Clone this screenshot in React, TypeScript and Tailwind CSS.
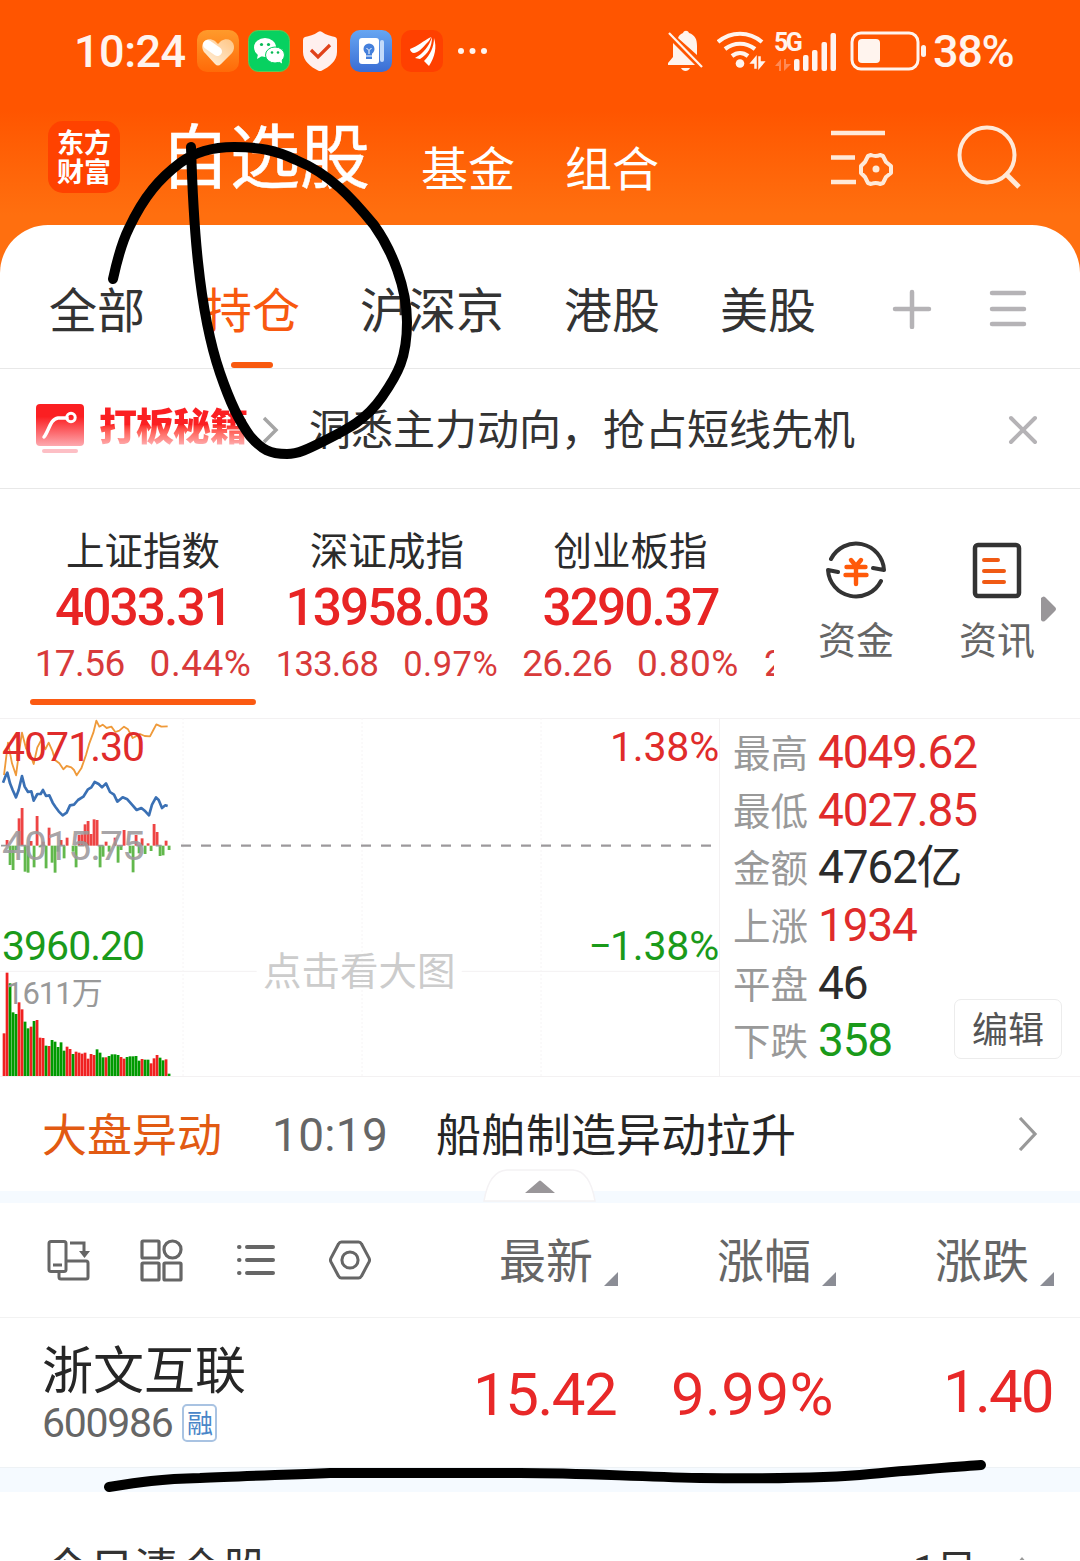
import type { ReactNode } from "react";
import clsx from "clsx";

const STATUS_APPS = ["health", "wechat", "shield", "notes", "eastmoney"] as const;

const INDICES = [
  { name: "上证指数", value: "4033.31", change: "17.56", rate: "0.44%", width: "w-[232px] ml-[27px]", small: false },
  { name: "深证成指", value: "13958.03", change: "133.68", rate: "0.97%", width: "w-[256px]", small: true },
  { name: "创业板指", value: "3290.37", change: "26.26", rate: "0.80%", width: "w-[231px]", small: false },
];

const STATS = [
  { label: "最高", value: "4049.62", color: "text-[#e02b2b]" },
  { label: "最低", value: "4027.85", color: "text-[#e02b2b]" },
  { label: "金额", value: "4762亿", color: "text-[#2b2b2b]" },
  { label: "上涨", value: "1934", color: "text-[#e02b2b]" },
  { label: "平盘", value: "46", color: "text-[#2b2b2b]" },
  { label: "下跌", value: "358", color: "text-[#1a9a1a]" },
];

const RED = "#f02121";
const GREEN = "#009a00";

// volume bars: [top, isUp]
const VOLUME: [number, number][] = [
  [970, 1], [788, 1], [820, 0], [907, 0], [912, 0], [877, 1], [898, 1], [935, 0],
  [955, 0], [950, 1], [933, 0], [930, 1], [983, 1], [984, 1], [1007, 0], [1008, 1],
  [990, 0], [995, 0], [1011, 0], [997, 0], [1022, 0], [1010, 1], [1017, 1], [1032, 0],
  [1025, 1], [1028, 1], [1031, 1], [1028, 1], [1046, 1], [1032, 1], [1035, 1], [1018, 0],
  [1028, 0], [1042, 0], [1042, 1], [1038, 0], [1033, 0], [1033, 0], [1035, 0], [1041, 1],
  [1046, 1], [1041, 0], [1039, 0], [1039, 0], [1038, 0], [1052, 0], [1047, 1], [1049, 0],
  [1049, 0], [1060, 1], [1045, 1], [1035, 1], [1043, 0], [1051, 0], [1048, 1], [1091, 0],
];

// momentum bars around the previous close: [slot, end]
const MOMENTUM: [number, number][] = [
  [1, 390], [2, 465], [3, 480], [4, 420], [5, 325], [6, 294], [7, 485], [8, 488], [9, 393],
  [10, 472], [11, 318], [12, 412], [13, 395], [14, 475], [15, 353], [16, 458], [17, 488],
  [18, 425], [19, 390], [20, 445], [21, 383], [23, 425], [24, 472], [25, 375], [26, 373],
  [27, 343], [28, 333], [29, 372], [30, 328], [31, 330], [32, 472], [33, 440], [34, 395],
  [35, 425], [37, 383], [38, 458], [39, 420], [40, 360], [42, 430], [43, 487], [44, 375],
  [45, 430], [46, 385], [47, 432], [48, 400], [49, 423], [50, 342], [51, 366], [52, 438],
  [53, 436], [54, 392], [55, 420],
];

const AVG_LINE =
  "12,195 24,98 36,160 48,196 58,120 66,68 78,115 90,130 101,162 112,112 124,90 136,118 146,98 158,125 165,150 178,160 190,178 200,168 214,172 222,180 230,196 244,175 258,135 268,100 280,68 289,32 298,50 308,44 320,54 334,50 346,66 358,62 372,50 384,58 398,84 410,78 420,72 434,78 450,79 460,60 469,43 484,50 503,49";
const PRICE_LINE =
  "9,218 16,200 22,188 30,220 38,240 48,262 56,240 66,198 74,230 84,246 94,244 101,272 112,252 122,252 129,240 138,258 148,256 158,278 166,290 176,304 188,316 200,308 210,286 222,284 234,270 250,260 264,238 274,232 284,216 296,222 306,232 318,220 330,246 342,254 352,275 368,262 382,268 396,284 410,300 424,294 436,304 447,316 456,284 468,262 476,270 486,294 496,286 503,288";

function AppIcon({ kind }: { kind: (typeof STATUS_APPS)[number] }) {
  if (kind === "health") {
    return (
      <svg viewBox="0 0 42 42" className="size-[42px]">
        <defs>
          <linearGradient id="health" x1="0" y1="0" x2="0" y2="1">
            <stop offset="0" stopColor="#ff9a2b" />
            <stop offset="1" stopColor="#ff6a08" />
          </linearGradient>
          <linearGradient id="heart" x1="1" y1="0" x2="0" y2="1">
            <stop offset="0" stopColor="#ffc583" />
            <stop offset="1" stopColor="#fff3e2" />
          </linearGradient>
        </defs>
        <rect width="42" height="42" rx="10" fill="url(#health)" />
        <path d="M18 34L8 23C1 15 9 5 18 11l3 3 3-3c9-6 17 4 11 12L24 34q-3 3-6 0z" fill="url(#heart)" />
        <path d="M10.500 14.500l10 7" stroke="#fff" strokeWidth="9" strokeLinecap="round" />
      </svg>
    );
  }
  if (kind === "wechat") {
    return (
      <svg viewBox="0 0 42 42" className="size-[42px]">
        <rect x=".5" y=".5" width="41" height="41" rx="10" fill="#07d160" stroke="#5cc956" />
        <ellipse cx="17" cy="17.500" rx="11" ry="9.500" fill="#fff" />
        <path d="M10 24l-1 5 5-3z" fill="#fff" />
        <ellipse cx="27" cy="25" rx="9.500" ry="8" fill="#fff" stroke="#07d160" />
        <path d="M30 31l4 2.500-.5-5z" fill="#fff" />
        <g fill="#07b955">
          <circle cx="13.500" cy="14.500" r="1.600" />
          <circle cx="20.500" cy="14.500" r="1.600" />
          <circle cx="24" cy="22.500" r="1.300" />
          <circle cx="30" cy="22.500" r="1.300" />
        </g>
      </svg>
    );
  }
  if (kind === "shield") {
    return (
      <svg viewBox="0 0 42 42" className="size-[42px]">
        <path d="M19 2q2-1.500 4 0c4 3 9 4 13 5q2 .5 2 3v12c0 9-8 15-15 18.500q-2 1-4 0C12 37 4 31 4 22V10q0-2.500 2-3c4-1 9-2 13-5z" fill="#fff0ee" />
        <path d="M12 20l7 7 12-12" fill="none" stroke="#e0421a" strokeWidth="3.200" />
      </svg>
    );
  }
  if (kind === "notes") {
    return (
      <svg viewBox="0 0 42 42" className="size-[42px]">
        <defs>
          <linearGradient id="notes" x1="0" y1="0" x2="0" y2="1">
            <stop offset="0" stopColor="#66a6f2" />
            <stop offset="1" stopColor="#3a6dd4" />
          </linearGradient>
        </defs>
        <rect width="42" height="42" rx="10" fill="url(#notes)" />
        <rect x="30" y="10" width="4" height="22" rx="2" fill="#c3dafa" />
        <rect x="9" y="8" width="20" height="26" rx="3" fill="#fff" />
        <circle cx="19" cy="19" r="5.500" fill="#4480dc" />
        <path d="M16 22h6v7h-6z" fill="#4480dc" />
        <path d="M16.500 18l2.500 2.500 2.500-2.500M19 20.500v3.500M16 26h6" stroke="#fff" fill="none" />
      </svg>
    );
  }
  return (
    <svg viewBox="0 0 42 42" className="size-[42px]">
      <rect width="42" height="42" rx="10" fill="#ff4000" />
      <path d="M9 19c8-3 13-8 21-12-1 3-3 5-5 7-4 5-9 9-12 9-2 0-4-2-4-4z" fill="#fff" />
      <path d="M31 7c-3 9-8 16-17 21l5 1c8-5 12-12 12-22z" fill="#fff" />
      <path d="M33 8c0 9-4 17-10 23l5 5c6-9 8-19 5-28z" fill="#fff" />
    </svg>
  );
}

function StatusBar() {
  return (
    <div className="flex h-[102px] items-center pl-[74px] text-[45px] font-medium leading-none text-[#fff4ee]">
      <span className="w-[123px] tracking-[-0.500px]">10:24</span>
      <div className="flex gap-[9px]">
        {STATUS_APPS.map((kind) => (
          <AppIcon key={kind} kind={kind} />
        ))}
      </div>
      <svg viewBox="0 0 32 8" className="ml-[14px] h-2 w-8" fill="currentColor">
        <circle cx="4" cy="4" r="3" />
        <circle cx="15.500" cy="4" r="3" />
        <circle cx="27" cy="4" r="3" />
      </svg>

      <svg viewBox="0 0 36 42" className="ml-[178px] h-[42px] w-9" fill="currentColor">
        <path d="M11 8c1-3 3-4 5-5 1-3 5-3 6 0 6 2 8 6 8 13v9zM6 13l22 22H1v-2l5-6z" />
        <path d="M14 38h9c-2 4-7 4-9 0z" />
        <path d="M2 3l33 34" stroke="currentColor" strokeWidth="2.200" />
      </svg>
      <svg viewBox="0 0 50 42" className="ml-[14px] h-[42px] w-[50px]">
        <g fill="none" stroke="currentColor" strokeWidth="4.200">
          <path d="M1 12c13-11 31-11 44 0" />
          <path d="M8 19c9-7 21-7 30 0" />
          <path d="M15 26c5-4 11-4 16 0" />
        </g>
        <circle cx="23" cy="33.500" r="4.300" fill="currentColor" />
        <path d="M39 27v11h-1v-5h-4zM42 38V27h1v5h4z" fill="currentColor" stroke="currentColor" strokeWidth="1.500" />
      </svg>
      <div className="ml-[7px] flex h-[42px] w-[66px] items-end">
        <div className="flex h-full w-5 flex-col justify-between">
          <span className="whitespace-nowrap text-[25px] font-bold leading-[25px] tracking-[-2.500px]">5G</span>
          <svg viewBox="0 0 18 14" className="h-[14px] w-[18px]" fill="#ff8a55">
            <path d="M7 1v12H5V8H1zM10 13V1h2v5h5z" />
          </svg>
        </div>
        <svg viewBox="0 0 44 40" className="h-10 w-11" fill="currentColor">
          <rect x="0" y="27" width="5.500" height="12" rx="2" />
          <rect x="9" y="23" width="5.500" height="16" rx="2" />
          <rect x="18" y="18" width="5.500" height="21" rx="2" />
          <rect x="27.500" y="10" width="5.500" height="29" rx="2" />
          <rect x="36.500" y="1" width="5.500" height="38" rx="2" />
        </svg>
      </div>
      <svg viewBox="0 0 78 40" className="ml-[10px] h-10 w-[78px]">
        <rect x="2" y="2" width="66" height="36" rx="9" fill="none" stroke="currentColor" strokeWidth="3" />
        <rect x="8" y="8" width="22" height="24" rx="4" fill="currentColor" />
        <rect x="71" y="14" width="5" height="12" rx="2.500" fill="currentColor" />
      </svg>
      <span className="ml-[5px] tracking-[-1.300px]">38%</span>
    </div>
  );
}

function TitleBar() {
  return (
    <div className="flex h-[123px] pl-12 text-white">
      <div className="mt-[19px] flex size-[72px] flex-col items-center justify-center rounded-[15px] bg-[#ff4200] pt-1 text-[27px] font-bold leading-[29px]">
        <span>东方</span>
        <span>财富</span>
      </div>
      <h1 className="ml-10 mt-[13px] w-[211px] whitespace-nowrap text-[70px] font-normal leading-[88px] [-webkit-text-stroke:0.500px_white]">
        自选股
      </h1>
      <span className="ml-[50px] mt-[39px] text-[47px] leading-[58px]">基金</span>
      <span className="ml-[50px] mt-[39px] text-[47px] leading-[58px]">组合</span>
      <svg viewBox="0 0 64 58" className="ml-[171px] mt-[27px] h-[58px] w-16" fill="none" stroke="#ffe9d8" strokeWidth="4.500">
        <path d="M1 4h54M1 28.500h24M1 53h25" />
        <path
          d="M41 26q5 2 9 0l3 1 3 6 5 4v7l-5 4-3 6-3 1q-4-2-9 0l-3-1-3-6-4-4v-7l4-4 3-6z"
          strokeLinejoin="round"
          strokeWidth="4"
        />
        <circle cx="46" cy="40" r="3.500" fill="#ffe9d8" stroke="none" />
      </svg>
      <svg viewBox="0 0 64 64" className="ml-[63px] mt-[23px] size-16" fill="none" stroke="#ffe9d8" strokeWidth="4">
        <circle cx="30" cy="30" r="27.500" />
        <path d="M48 48l14 14" strokeWidth="5" />
      </svg>
    </div>
  );
}

function Tabs() {
  return (
    <nav className="flex h-[144px] border-b border-[#e8e8e8] pl-[49px] text-[48px] leading-[174px] text-[#333]">
      <span>全部</span>
      <span className="ml-[59px] flex w-24 flex-col items-center text-[#f8590f]">
        <span className="h-[137px]">持仓</span>
        <span className="h-[6px] w-[42px] rounded-full bg-[#f8590f]" />
      </span>
      <span className="ml-[60px]">沪深京</span>
      <span className="ml-[60px]">港股</span>
      <span className="ml-[60px]">美股</span>
      <svg viewBox="0 0 40 40" className="ml-[76px] mt-[64px] size-10" stroke="#b5b3b6" strokeWidth="4.500" strokeLinecap="round">
        <path d="M3 20h34M20 3v35" />
      </svg>
      <svg viewBox="0 0 40 40" className="ml-14 mt-[64px] size-10" stroke="#b5b3b6" strokeWidth="4.500" strokeLinecap="round">
        <path d="M4 4h32M4 20h32M4 35h32" />
      </svg>
    </nav>
  );
}

function PromoBar() {
  return (
    <div className="flex h-[120px] items-center border-b border-[#e8e8e8] pl-9">
      <svg viewBox="0 0 48 50" className="h-[50px] w-12">
        <defs>
          <linearGradient id="promo" x1="0" y1="0" x2="0" y2="1">
            <stop offset="0.300" stopColor="#fb1f22" />
            <stop offset="1" stopColor="#fda9af" />
          </linearGradient>
        </defs>
        <rect width="48" height="42" rx="4" fill="url(#promo)" />
        <path d="M8 33c5-6 6-18 14-19h9" fill="none" stroke="#fff" strokeWidth="3.500" strokeLinecap="round" />
        <circle cx="35" cy="13.500" r="4.200" fill="none" stroke="#fff" strokeWidth="3" />
        <rect x="6" y="45" width="36" height="4" rx="2" fill="#fdbfc5" />
      </svg>
      <span className="mb-1 ml-[15px] w-[149px] whitespace-nowrap bg-linear-to-b from-[#fb1f22] from-45% to-[#fdb5ba] to-90% bg-clip-text text-[38px] font-black leading-[50px] tracking-[-1px] text-transparent">
        打板秘籍
      </span>
      <svg viewBox="0 0 16 28" className="ml-[15px] mt-0.5 h-7 w-4" fill="none" stroke="#a5a5a5" strokeWidth="3.500">
        <path d="M1 2l12 12L1 26" />
      </svg>
      <span className="ml-[30px] mt-1 whitespace-nowrap text-[42px] text-[#333]">洞悉主力动向，抢占短线先机</span>
      <svg viewBox="0 0 30 30" className="ml-[153px] mt-0.5 size-[30px]" stroke="#b5b3b6" strokeWidth="4" strokeLinecap="round">
        <path d="M3 3l24 24M27 3L3 27" />
      </svg>
    </div>
  );
}

function Shortcut({ label, children }: { label: string; children: ReactNode }) {
  return (
    <div className="flex w-[82px] flex-col items-center">
      <svg viewBox="0 0 60 60" className="size-[60px]" fill="none" strokeLinecap="round" strokeLinejoin="round">
        {children}
      </svg>
      <span className="mt-[16px] text-[38px] leading-[50px] text-[#666]">{label}</span>
    </div>
  );
}

function IndexStrip() {
  return (
    <div className="flex h-[229px]">
      <div className="flex w-[774px] shrink-0 overflow-hidden">
        {INDICES.map((item, i) => (
          <div key={item.name} className={clsx("flex shrink-0 flex-col items-center pt-[38px]", item.width)}>
            <span className="text-[38.500px] leading-[50px] text-[#2b2b2b]">{item.name}</span>
            <span className="mt-[3px] text-[51.500px] font-medium leading-[56px] tracking-[-2px] text-[#e82424]">
              {item.value}
            </span>
            <span
              className={clsx(
                "mt-[3px] flex h-[50px] items-center gap-[25px] whitespace-nowrap text-[#d83a3a]",
                item.small ? "pt-0.5 text-[34.500px]" : "text-[37px]"
              )}
            >
              <span className="tracking-[-0.600px]">{item.change}</span>
              <span className="tracking-[0.500px]">{item.rate}</span>
            </span>
            {i === 0 ? <span className="mt-[10px] h-[6px] w-[226px] rounded-full bg-[#fb5a12]" /> : null}
          </div>
        ))}
        <span className="ml-[18px] pt-[150px] text-[37px] leading-[50px] text-[#d83a3a]">2</span>
      </div>
      <div className="flex pl-[41px] pt-[51px]">
        <Shortcut label="资金">
          <path d="M5 19a28 28 0 0 1 53 11l-11-2" stroke="#333" strokeWidth="4" />
          <path d="M55 41A28 28 0 0 1 2 30l10 2" stroke="#333" strokeWidth="4" />
          <path d="M25 20l5 6 5-6M20.500 27h19M19.500 35h21M30 26v18" stroke="#ff5a0a" strokeWidth="4.400" />
        </Shortcut>
        <div className="w-[59px]" />
        <Shortcut label="资讯">
          <rect x="8" y="5" width="44" height="51" rx="3" stroke="#333" strokeWidth="4.500" />
          <path d="M17 20h14M17 31h20M17 42h20" stroke="#f05a14" strokeWidth="4" />
        </Shortcut>
        <svg viewBox="0 0 15 26" className="ml-[3px] mt-14 h-[26px] w-[15px]" fill="#999699">
          <path d="M0 2Q3-1 5 2l9 9q2 2 0 4l-9 9q-3 3-5 0z" />
        </svg>
      </div>
    </div>
  );
}

function MinuteChart() {
  return (
    <div className="relative h-[359px] w-[720px] text-[41px] leading-[50px] tracking-[-1px]">
      <svg viewBox="0 24 2160 1077" className="h-[359px] w-[720px]">
        <path d="M0 25.500h2160M0 784h770M1385 784h775M0 1099.500h2160M2158.500 24v1076" stroke="#f3f1f2" strokeWidth="3" />
        <path d="M549 24v1076M1086 24v1076M1623 24v1076" stroke="#f6f4f5" strokeWidth="3" strokeDasharray="6 6" />
        <polyline points={AVG_LINE} fill="none" stroke="#ef9a3a" strokeWidth="5.500" strokeLinejoin="round" />
        <polyline points={PRICE_LINE} fill="none" stroke="#3a70b4" strokeWidth="8" strokeLinejoin="round" />
        {MOMENTUM.map(([slot, end]) => (
          <rect
            key={slot}
            x={8 + slot * 9}
            y={Math.min(407, end)}
            width="8.500"
            height={Math.abs(end - 407)}
            fill={end < 407 ? "#ee4444" : "#62b84c"}
          />
        ))}
        {VOLUME.map(([top, up], i) => (
          <rect key={i} x={8 + i * 9} y={top} width="8.300" height={1098 - top} fill={up ? RED : GREEN} />
        ))}
        <path d="M3 407h507" stroke="#999" strokeWidth="5" strokeDasharray="18 40" />
        <path d="M543 407h1600" stroke="#9c999c" strokeWidth="7" strokeDasharray="30 30" />
      </svg>
      <span className="absolute left-[2px] top-[4px] text-[#e02b2b]">4071.30</span>
      <span className="absolute left-[2px] top-[103px] text-[#9c999c]/90">4015.75</span>
      <span className="absolute left-[2px] top-[203px] text-[#1a9a1a]">3960.20</span>
      <span className="absolute right-[1px] top-[4px] tracking-[-0.200px] text-[#e02b2b]">1.38%</span>
      <span className="absolute right-[1px] top-[203px] tracking-[-0.200px] text-[#1a9a1a]">
        <span className="tracking-[-2px]">−</span>1.38%
      </span>
      <span className="absolute left-[6px] top-[251px] text-[31px] text-[#999]">1611万</span>
      <span className="absolute left-[263px] top-[229px] text-[38.500px] tracking-normal text-[#ccc]">点击看大图</span>
    </div>
  );
}

function MarketPanel() {
  return (
    <div className="flex h-[359px]">
      <MinuteChart />
      <div className="flex flex-1 border-y border-[#f3f1f2] pl-[13px]">
        <dl className="w-[221px] shrink-0 pt-[5px]">
          {STATS.map((stat) => (
            <div key={stat.label} className="flex h-[57.600px] items-center whitespace-nowrap">
              <dt className="w-[85px] shrink-0 pt-[3px] text-[37.500px] text-[#999]">{stat.label}</dt>
              <dd className={clsx("text-[46px] tracking-[-1.200px]", stat.color)}>{stat.value}</dd>
            </div>
          ))}
        </dl>
        <button className="mt-[280px] h-[60px] w-[108px] shrink-0 rounded-[7px] border border-[#ececec] pt-1 text-[36px] leading-none text-[#555]">
          编辑
        </button>
      </div>
    </div>
  );
}

function NewsRow() {
  return (
    <div className="flex h-[114px] items-center pl-[42px] text-[45px]">
      <span className="pt-[6px] text-[#e25a12]">大盘异动</span>
      <span className="ml-[50px] w-[114px] whitespace-nowrap pt-0.5 text-[46px] tracking-[0.300px] text-[#666]">10:19</span>
      <span className="ml-[50px] whitespace-nowrap pt-[6px] text-[#262626]">船舶制造异动拉升</span>
      <svg viewBox="0 0 20 34" className="ml-[222px] h-[34px] w-5" fill="none" stroke="#999" strokeWidth="3.200">
        <path d="M2 1l15 16L2 33" />
      </svg>
    </div>
  );
}

function Divider() {
  return (
    <div className="relative h-[12px] bg-[#f5faff]">
      <svg viewBox="0 0 114 34" className="absolute bottom-0 left-[483px] h-[34px] w-[114px]">
        <path d="M1 32Q6 2 24 1h66q17 1 22 31z" fill="#fff" stroke="#f4f2f4" strokeWidth="1.500" />
        <path d="M42 24l14-12q1-1 2 0l14 12z" fill="#999699" />
      </svg>
    </div>
  );
}

function SortHeader({ label, className }: { label: string; className?: string }) {
  return (
    <div className={clsx("flex h-[60px] items-end", className)}>
      <span className="text-[47px] leading-[56px] text-[#666]">{label}</span>
      <svg viewBox="0 0 14 14" className="mb-[4px] ml-[11px] size-[14px]" fill="#8b8d95">
        <path d="M14 0v14H0z" />
      </svg>
    </div>
  );
}

function TableHeader() {
  return (
    <div className="flex h-[115px] items-center border-b border-[#f2f2f2] pl-[47px]">
      <svg viewBox="0 0 44 42" className="h-[42px] w-11" fill="none" stroke="#666" strokeWidth="3">
        <rect x="2" y="2.500" width="17" height="30" rx="2" />
        <path d="M6 26h9M12 33v5q0 2 2 2h25q2 0 2-2V24q0-2-2-2H20M23 4h14v12" />
        <path d="M32 12h11l-5.500 7z" fill="#666" stroke="none" />
      </svg>
      <svg viewBox="0 0 44 44" className="ml-[48px] size-11" fill="none" stroke="#666" strokeWidth="3.200">
        <rect x="3" y="3" width="17" height="17" rx="1" />
        <circle cx="33.500" cy="11.500" r="8.500" />
        <rect x="3" y="25" width="17" height="17" rx="1" />
        <rect x="25" y="25" width="17" height="17" rx="1" />
      </svg>
      <svg viewBox="0 0 40 34" className="ml-[53px] h-[34px] w-10" stroke="#666" strokeWidth="4" strokeLinecap="round">
        <path d="M3 4h.5M3 17h.5M3 30h.5M11 4h26M11 17h26M11 30h26" />
      </svg>
      <svg viewBox="0 0 44 42" className="ml-[53px] h-[40px] w-[42px]" fill="none" stroke="#666" strokeWidth="3.200" strokeLinejoin="round">
        <path d="M13 2h18q2 0 3 2l8 15q1 2 0 4l-8 15q-1 2-3 2H13q-2 0-3-2L2 23q-1-2 0-4l8-15q1-2 3-2z" />
        <circle cx="22" cy="21" r="8.500" />
      </svg>
      <SortHeader label="最新" className="ml-[128px]" />
      <SortHeader label="涨幅" className="ml-[99px]" />
      <SortHeader label="涨跌" className="ml-[99px]" />
    </div>
  );
}

function StockRow() {
  return (
    <div className="flex h-[150px] border-b border-[#eef2f5] pl-[42px] text-[60px] text-[#e82828]">
      <div className="w-[431px] pt-[25px]">
        <div className="text-[51px] leading-[57px] text-[#262626]">浙文互联</div>
        <div className="flex items-center text-[41px] leading-[46px] tracking-[-1.300px] text-[#666]">
          600986
          <span className="ml-[10px] flex h-[38px] w-[35px] items-center justify-center rounded-[5px] border-2 border-[#a9c3e2] pt-0.5 text-[26px] tracking-normal text-[#4a86c8]">
            融
          </span>
        </div>
      </div>
      <span className="w-[198px] whitespace-nowrap leading-[153px] tracking-[-1.500px]">15.42</span>
      <span className="w-[272px] whitespace-nowrap leading-[153px] tracking-[0.400px]">9.99%</span>
      <span className="whitespace-nowrap leading-[147px] tracking-[-1.800px]">1.40</span>
    </div>
  );
}

function ClearedRow() {
  return (
    <div className="flex h-[68px] justify-between overflow-hidden pl-[45px] pr-12 text-[44.500px] leading-[60px] text-[#333]">
      <span className="pt-[48px]">今日清仓股</span>
      <span className="flex pt-[48px] text-[41px]">
        1日
        <svg viewBox="0 0 20 12" className="ml-[35px] mt-[17px] h-3 w-5" fill="#999">
          <path d="M10 0l10 12H0z" />
        </svg>
      </span>
    </div>
  );
}

// hand drawn marks on top of the page
function PenMarks() {
  return (
    <svg
      viewBox="0 0 1080 1561"
      className="pointer-events-none absolute inset-0 h-[1561px] w-[1080px]"
      fill="none"
      stroke="#000"
      strokeWidth="10"
      strokeLinecap="round"
      strokeLinejoin="round"
    >
      <path d="M113 279C118 256 122 242 129 228C144 196 160 178 180 163C196 151 214 147 234 147C258 147 276 150 296 160C330 174 352 198 374 225C392 250 407 288 407 322C407 358 398 374 382 397C366 420 348 429 324 441C308 449 298 454 287 454C270 454 262 450 250 436C238 420 230 402 220 373C208 338 202 300 198 262C194 225 192 180 191 147" />
      <path d="M109 1487C140 1482 160 1479 200 1478C240 1476 280 1475 330 1473H520C580 1473 620 1476 700 1478C780 1479 830 1478 870 1474C910 1470 940 1468 981 1465" />
    </svg>
  );
}

export default function App() {
  return (
    <div className="relative h-[1561px] w-[1080px] overflow-hidden bg-linear-to-b from-[#ff5500] from-[110px] to-[#ff6f0f] to-[215px] font-[Roboto,'Noto_Sans_CJK_SC',sans-serif]">
      <StatusBar />
      <TitleBar />
      <main className="h-[1336px] rounded-t-[48px] bg-white">
        <Tabs />
        <PromoBar />
        <IndexStrip />
        <MarketPanel />
        <NewsRow />
        <Divider />
        <TableHeader />
        <StockRow />
        <div className="h-[24px] bg-[#f5faff]" />
        <ClearedRow />
      </main>
      <PenMarks />
    </div>
  );
}
